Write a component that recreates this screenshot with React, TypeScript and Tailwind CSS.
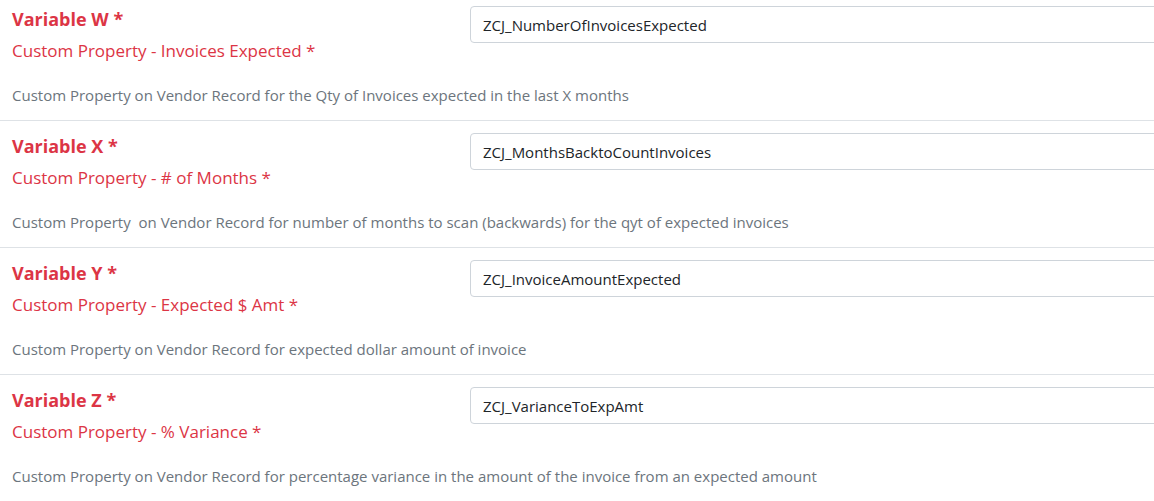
const rows = [
  {
    title: "Variable W *",
    label: "Custom Property - Invoices Expected *",
    value: "ZCJ_NumberOfInvoicesExpected",
    help: "Custom Property on Vendor Record for the Qty of Invoices expected in the last X months",
  },
  {
    title: "Variable X *",
    label: "Custom Property - # of Months *",
    value: "ZCJ_MonthsBacktoCountInvoices",
    help: "Custom Property  on Vendor Record for number of months to scan (backwards) for the qyt of expected invoices",
  },
  {
    title: "Variable Y *",
    label: "Custom Property - Expected $ Amt *",
    value: "ZCJ_InvoiceAmountExpected",
    help: "Custom Property on Vendor Record for expected dollar amount of invoice",
  },
  {
    title: "Variable Z *",
    label: "Custom Property - % Variance *",
    value: "ZCJ_VarianceToExpAmt",
    help: "Custom Property on Vendor Record for percentage variance in the amount of the invoice from an expected amount",
  },
];

export default function App() {
  return (
    <div className="h-[501px] w-[1154px] overflow-hidden bg-white font-['Open_Sans',sans-serif]">
      <div className="-mt-[6px] w-[1300px]">
        {rows.map((row, i) => (
          <div
            key={row.title}
            className={`px-3 pt-3 pb-[14px] ${i < rows.length - 1 ? "border-b border-[#dee2e6]" : ""}`}
          >
            <div className="flex">
              <div className="w-[446px] shrink-0">
                <div className="text-[18px] leading-[27px] font-bold text-[#dc3545]">
                  {row.title}
                </div>
                <div className="mt-1.5 text-[17px] leading-6 text-[#dc3545]">
                  {row.label}
                </div>
              </div>
              <div className="ml-3 flex-1">
                <input
                  readOnly
                  value={row.value}
                  className="h-[37px] w-full rounded-[4px] border border-[#ced4da] px-3 text-[15px] text-[#212529] outline-none"
                />
              </div>
            </div>
            <p className="mt-[22px] text-[15px] leading-[21px] whitespace-pre text-[#6c757d]">
              {row.help}
            </p>
          </div>
        ))}
      </div>
    </div>
  );
}
